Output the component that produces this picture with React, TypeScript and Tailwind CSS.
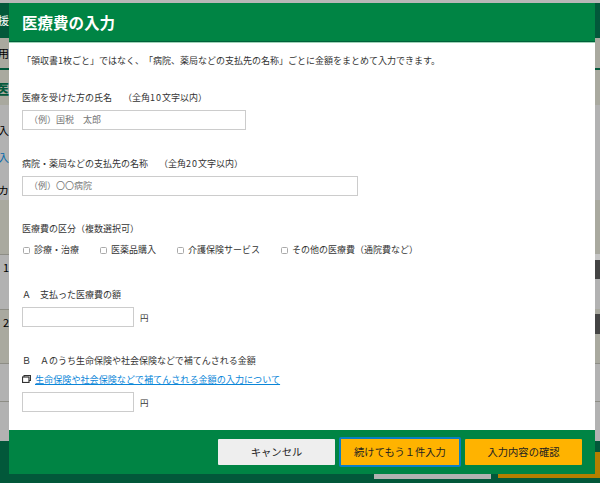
const font = { fontFamily: '"Noto Sans CJK JP", "Liberation Sans", sans-serif' };

function LeftEdge() {
  return (
    <div className="absolute left-0 top-0 w-[9px] h-[483px] overflow-hidden flex flex-col bg-[#b2b2b2] text-[11px] leading-none text-black">
      <div className="h-[3px] shrink-0 bg-[#b8b8b8]" />
      <div className="h-[35px] shrink-0 bg-[#02583a] text-white flex items-center justify-end"><span>援</span></div>
      <div className="h-[30px] shrink-0 bg-[#a9a99f] flex items-center justify-end"><span>用</span></div>
      <div className="h-[2px] shrink-0 bg-[#02583a]" />
      <div className="h-[35px] shrink-0 bg-[#a9a99f] flex items-center justify-end text-[#02583a] font-bold text-[14px]"><span>医</span></div>
      <div className="h-[10px] shrink-0" />
      <div className="h-[30px] shrink-0 flex items-center justify-end"><span>入</span></div>
      <div className="h-[25px] shrink-0 flex items-center justify-end text-[#0a6cab]"><span>入</span></div>
      <div className="h-[10px] shrink-0" />
      <div className="h-[20px] shrink-0 flex items-center justify-end"><span>カ</span></div>
      <div className="h-[54px] shrink-0 bg-[#a9a99f]" />
      <div className="h-[55px] shrink-0 pt-[7px] flex items-start justify-end border-t border-[#8d8d85]"><span>1</span></div>
      <div className="h-[54px] shrink-0 pt-[7px] bg-[#a9a99f] flex items-start justify-end border-t border-[#8d8d85]"><span>2</span></div>
      <div className="h-[38px] shrink-0 border-t border-[#8d8d85]" />
      <div className="h-[40px] shrink-0 border-t border-[#8d8d85]" />
      <div className="flex-1 bg-[#02583a]" />
    </div>
  );
}

function RightEdge() {
  return (
    <div className="absolute right-0 top-0 w-[5px] h-[483px] overflow-hidden flex flex-col bg-[#b2b2b2]">
      <div className="h-[3px] shrink-0 bg-[#b8b8b8]" />
      <div className="h-[35px] shrink-0 bg-[#02583a]" />
      <div className="h-[30px] shrink-0 bg-[#a9a99f]" />
      <div className="h-[2px] shrink-0 bg-[#02583a]" />
      <div className="h-[35px] shrink-0 bg-[#a9a99f]" />
      <div className="h-[95px] shrink-0" />
      <div className="h-[54px] shrink-0 bg-[#a9a99f]" />
      <div className="h-[6px] shrink-0 bg-[#c4c4c4]" />
      <div className="h-[19px] shrink-0 bg-[#444444]" />
      <div className="h-[30px] shrink-0" />
      <div className="h-[5px] shrink-0 bg-[#a9a99f]" />
      <div className="h-[20px] shrink-0 bg-[#444444]" />
      <div className="h-[29px] shrink-0 bg-[#a9a99f]" />
      <div className="h-[38px] shrink-0 border-t border-[#8d8d85]" />
      <div className="h-[40px] shrink-0 border-t border-[#8d8d85]" />
      <div className="flex-1 bg-[#02583a]" />
    </div>
  );
}

function Field({ label, placeholder, width }: { label: React.ReactNode; placeholder: string; width: string }) {
  return (
    <div>
      <p className="text-[9px] leading-[14px] text-[#333]">{label}</p>
      <div className={`mt-[5px] h-[20px] border border-[#cccccc] pl-[6px] flex items-center text-[9px] text-[#777] ${width}`}>{placeholder}</div>
    </div>
  );
}

function Check({ label }: { label: string }) {
  return (
    <span className="flex items-center gap-[3px]">
      <span className="w-[9px] h-[9px] p-[1px]">
        <span className="block w-[7px] h-[7px] border border-[#aaa] rounded-[1.5px] bg-white" />
      </span>
      <span>{label}</span>
    </span>
  );
}

function Amount() {
  return (
    <div className="flex items-center gap-[6px]">
      <div className="w-[112px] h-[20px] border border-[#cccccc]" />
      <span className="text-[8.5px] text-[#333]">円</span>
    </div>
  );
}

export default function App() {
  return (
    <div style={font} className="relative w-[600px] h-[483px] overflow-hidden bg-[#b8b8b8] [text-spacing-trim:space-all]">
      <LeftEdge />
      <RightEdge />
      <div className="absolute left-0 top-[441px] w-[600px] h-[42px] bg-[#02583a] -z-0" />
      <div className="absolute left-[374px] top-[474px] w-[117px] h-[5px] bg-[#b2b2b2]" />
      <div className="absolute left-[498px] top-[452px] w-[102px] h-[26px] bg-[#b47f00]" />
      <div className="absolute left-[9px] top-[3px] w-[586px] h-[471px] flex flex-col bg-white">
        <header className="h-[39px] shrink-0 bg-[#008444] border-b border-[#00603a] pl-[13px] pt-[1px] flex items-center text-[15.5px] font-bold text-white">医療費の入力</header>
        <div className="h-[1px] shrink-0 bg-[#9fd4b8]" />
        <main className="flex-1 pl-[13px] pt-[11px] flex flex-col">
          <p className="text-[9px] leading-[14px] text-[#333]">「領収書1枚ごと」ではなく、「病院、薬局などの支払先の名称」ごとに金額をまとめて入力できます。</p>
          <div className="mt-[23px]">
            <Field label={<>医療を受けた方の氏名　 （全角<span className="tracking-[1px]">10</span>文字以内）</>} placeholder="（例）国税　太郎" width="w-[224px]" />
          </div>
          <div className="mt-[27px]">
            <Field label={<>病院・薬局などの支払先の名称　 （全角<span className="tracking-[1px]">20</span>文字以内）</>} placeholder="（例）〇〇病院" width="w-[336px]" />
          </div>
          <div className="mt-[26px]">
            <p className="text-[9px] leading-[14px] text-[#333]">医療費の区分（複数選択可）</p>
            <div className="mt-[7px] flex gap-[20px] text-[9px] leading-[14px] text-[#333]">
              <Check label="診療・治療" />
              <Check label="医薬品購入" />
              <Check label="介護保険サービス" />
              <Check label="その他の医療費（通院費など）" />
            </div>
          </div>
          <div className="mt-[31px]">
            <p className="text-[9px] leading-[14px] text-[#333]">Ａ　支払った医療費の額</p>
            <div className="mt-[5px]"><Amount /></div>
          </div>
          <div className="mt-[27px]">
            <p className="text-[9px] leading-[14px] text-[#333]">Ｂ　Ａのうち生命保険や社会保険などで補てんされる金額</p>
            <div className="mt-[4px] flex items-center gap-[4px] text-[9.1px] leading-[14px]">
              <svg width="9" height="8" viewBox="0 0 9 8" className="shrink-0">
                <rect x="2" y="0.5" width="6.5" height="5" fill="#fff" stroke="#333" />
                <rect x="0.5" y="2" width="6.5" height="5.5" fill="#fff" stroke="#333" strokeWidth="1.2" />
              </svg>
              <a className="text-[#0a86d8] underline">生命保険や社会保険などで補てんされる金額の入力について</a>
            </div>
            <div className="mt-[6px]"><Amount /></div>
          </div>
        </main>
        <footer className="h-[44px] shrink-0 bg-[#008444] flex items-center justify-end pr-[13px] gap-[4px] text-[10.3px] text-[#222]">
          <div className="w-[117px] h-[26px] bg-[#eeeeee] flex items-center justify-center rounded-[1px]">キャンセル</div>
          <div className="w-[122px] h-[30px] bg-[#ffb300] border-[2px] border-[#0a7fc4] rounded-[2px] flex items-center justify-center">続けてもう１件入力</div>
          <div className="w-[117px] h-[26px] bg-[#ffb300] rounded-[1px] flex items-center justify-center">入力内容の確認</div>
        </footer>
      </div>
    </div>
  );
}
